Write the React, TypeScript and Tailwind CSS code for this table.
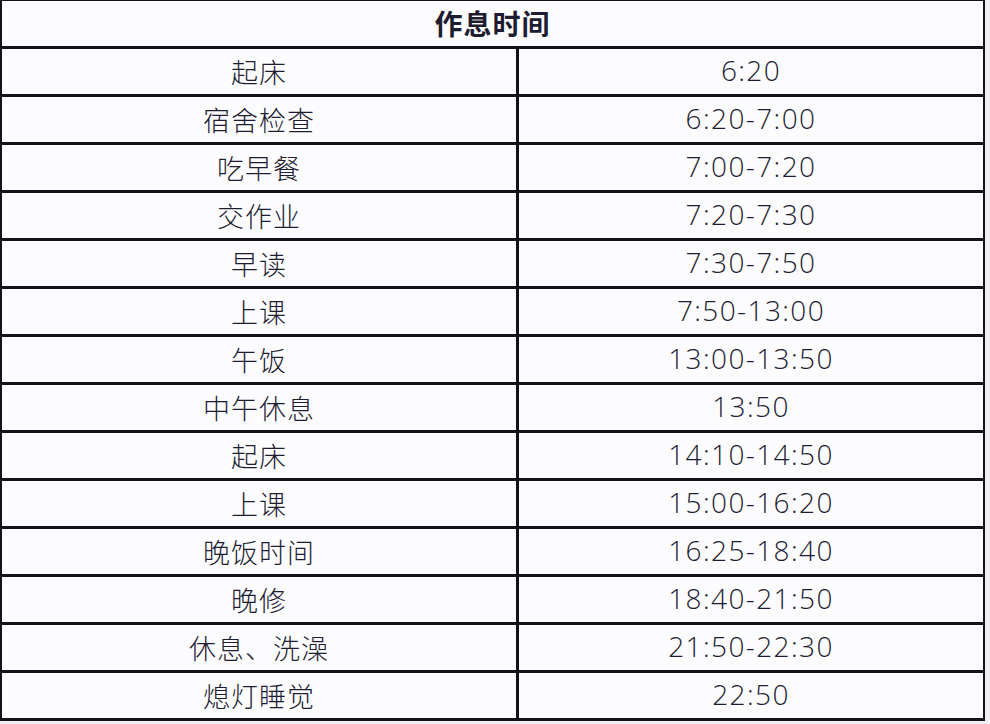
import React from "react";

const rows: [string, string][] = [
  ["起床", "6:20"],
  ["宿舍检查", "6:20-7:00"],
  ["吃早餐", "7:00-7:20"],
  ["交作业", "7:20-7:30"],
  ["早读", "7:30-7:50"],
  ["上课", "7:50-13:00"],
  ["午饭", "13:00-13:50"],
  ["中午休息", "13:50"],
  ["起床", "14:10-14:50"],
  ["上课", "15:00-16:20"],
  ["晚饭时间", "16:25-18:40"],
  ["晚修", "18:40-21:50"],
  ["休息、洗澡", "21:50-22:30"],
  ["熄灯睡觉", "22:50"],
];

export default function App() {
  return (
    <div className="w-[990px] h-[724px] bg-[#efeff1] overflow-hidden">
      <div className="w-[985px] bg-[#fcfcff] border-l-[2px] border-r-[2px] border-t-[1px] border-[#121218] text-[#1e1c30]">
        <div className="h-[48px] border-b-[3px] border-[#121218] flex items-center justify-center pb-[2px]">
          <span
            className="text-[28px] font-bold leading-none tracking-[1px]"
            style={{ fontFamily: '"Noto Sans CJK SC", sans-serif' }}
          >
            作息时间
          </span>
        </div>
        {rows.map(([a, b], i) => (
          <div key={i} className="h-[48px] border-b-[3px] border-[#121218] flex">
            <div className="w-[514px] flex items-center justify-center">
              <span
                className="text-[27px] font-light leading-none tracking-[1px]"
                style={{ fontFamily: '"Noto Sans CJK SC", sans-serif' }}
              >
                {a}
              </span>
            </div>
            <div className="w-[3px] bg-[#121218]" />
            <div className="flex-1 flex items-center justify-center pb-[4px]">
              <span
                className="text-[28px] font-light leading-none tracking-[1.4px]"
                style={{ fontFamily: '"Open Sans", sans-serif' }}
              >
                {b}
              </span>
            </div>
          </div>
        ))}
      </div>
    </div>
  );
}
